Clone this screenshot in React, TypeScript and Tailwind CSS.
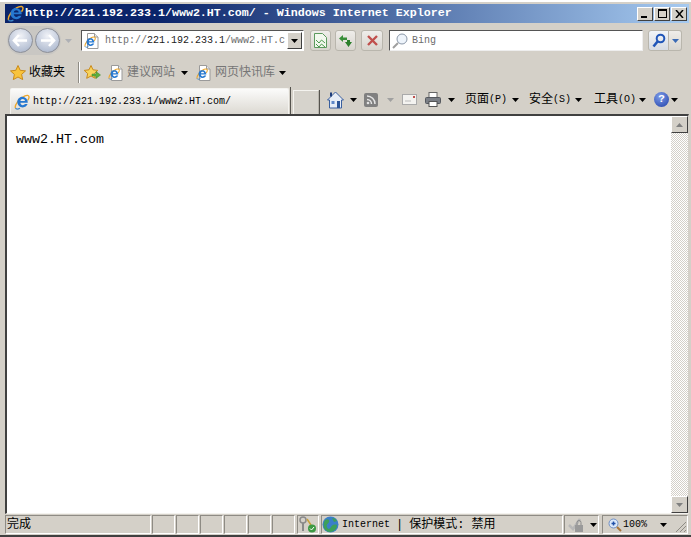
import type { ReactNode } from 'react';

const mono = { fontFamily: '"Liberation Mono", "Noto Sans CJK SC", monospace' };

function IeIcon({ size = 16 }: { size?: number }) {
  return (
    <svg width={size} height={size} viewBox="0 0 16 16" className="shrink-0">
      <path d="M1.500 14C.3 11.500 5 4 11 1.800c2-.7 3.800-.7 4 1 .2 1.200-.6 2.600-1.400 3.600" fill="none" stroke="#eca72c" strokeWidth="1.400" />
      <path d="M8.200 2.800a5.600 5.600 0 0 1 5.600 6H6.400c.1 1.500 1.100 2.400 2.400 2.400 1 0 1.700-.4 2.200-1.100h2.600c-.7 2-2.600 3.300-4.800 3.300-3.100 0-5.500-2.300-5.500-5.300 0-3 2.300-5.300 5-5.300zM6.400 7h4.600c-.1-1.200-1-2-2.300-2S6.600 5.900 6.400 7z" fill="#2678d0" />
      <path d="M1.500 14c.5 1.400 2.500 1.300 4.500.2" fill="none" stroke="#3d86c9" strokeWidth="1.200" />
    </svg>
  );
}

function PageIe() {
  return (
    <span className="relative block w-[15px] h-[16px] shrink-0">
      <svg width="15" height="16" viewBox="0 0 15 16" className="absolute left-0 top-0">
        <path d="M3.500.5h7l3.500 3.500v11.500h-10.500z" fill="#fff" stroke="#9a9a9a" />
        <path d="M10.500.5v3.500h3.500" fill="#e8e8e8" stroke="#9a9a9a" />
      </svg>
      <span className="absolute left-0 top-[3px]">
        <IeIcon size={12} />
      </span>
    </span>
  );
}

function Caret({ color = '#000' }: { color?: string }) {
  return (
    <svg width="7" height="4" viewBox="0 0 7 4" className="shrink-0">
      <path d="M0 0h7L3.500 4z" fill={color} />
    </svg>
  );
}

function NavButton({ dir }: { dir: 'left' | 'right' }) {
  return (
    <span className="block w-[25px] h-[25px] rounded-full border border-[#8c8f98] bg-[radial-gradient(circle_at_50%_30%,#f0f2f7,#b9c3d6_70%,#a4adc0)] flex items-center justify-center shrink-0">
      <svg width="17" height="13" viewBox="0 0 17 13">
        {dir === 'left' ? (
          <path d="M7 1 2 6.500 7 12M2.500 6.500H15" fill="none" stroke="#fff" strokeWidth="2.600" />
        ) : (
          <path d="M10 1l5 5.500L10 12M14.500 6.500H2" fill="none" stroke="#fff" strokeWidth="2.600" />
        )}
      </svg>
    </span>
  );
}

function ToolButton({ children, className = '' }: { children: ReactNode; className?: string }) {
  return (
    <span className={`flex h-[21px] items-center justify-center rounded-[3px] border border-[#b9b6ad] bg-[linear-gradient(#efedea,#d8d5ce)] shrink-0 ${className}`}>
      {children}
    </span>
  );
}

function StatusCell({ className = '', children }: { className?: string; children?: ReactNode }) {
  return (
    <span className={`flex h-full items-center border border-t-[#8e8b84] border-l-[#8e8b84] border-r-[#fff] border-b-[#fff] shrink-0 ${className}`}>
      {children}
    </span>
  );
}

function CommandMenu({ label, hot, className = '' }: { label: string; hot: string; className?: string }) {
  return (
    <span className={`flex items-center shrink-0 whitespace-nowrap text-[12px] text-black ${className}`}>
      {label}
      <span className="text-[10px]">({hot})</span>
    </span>
  );
}

export default function App() {
  return (
    <div className="w-[691px] h-[537px] overflow-hidden bg-[#d4d0c8] flex flex-col pl-[5px] pr-[2px] pt-[4px] pb-px border-t-2 border-t-white border-b-2 border-b-[#404040]" style={mono}>
      {/* title bar */}
      <div className="h-[19px] -mt-[2px] flex items-center pl-[2px] pr-[2px] bg-[linear-gradient(90deg,#0a246a,#0a246a_22%,#a6caf0)] shrink-0">
        <IeIcon size={17} />
        <span className="ml-px text-[11.67px] font-bold text-white whitespace-nowrap">http://221.192.233.1/www2.HT.com/ - Windows Internet Explorer</span>
        <div className="ml-auto flex gap-px">
          {['min', 'max', 'close'].map((name) => (
            <span key={name} className="relative w-[16px] h-[14px] bg-[#d4d0c8] border border-t-white border-l-white border-r-[#404040] border-b-[#404040] flex items-center justify-center">
              {name === 'min' && <span className="absolute left-[3px] bottom-[2px] w-[6px] h-[2px] bg-black" />}
              {name === 'max' && <span className="w-[9px] h-[9px] border border-black border-t-2" />}
              {name === 'close' && (
                <svg width="9" height="8" viewBox="0 0 9 8">
                  <path d="M1 0l7 8M8 0L1 8" stroke="#000" strokeWidth="1.500" />
                </svg>
              )}
            </span>
          ))}
        </div>
      </div>

      {/* address row */}
      <div className="h-[35px] flex items-center shrink-0 pl-[2px]">
        <span className="flex w-[54px] h-[29px] items-center justify-between px-[1px] rounded-full bg-[#c9c7c3] shrink-0">
          <NavButton dir="left" />
          <NavButton dir="right" />
        </span>
        <span className="ml-[4px] mr-[9px]">
          <Caret color="#aeb0b5" />
        </span>
        <div className="w-[223px] h-[21px] flex items-center bg-white border border-t-[#555] border-l-[#555] border-r-white border-b-white shrink-0">
          <span className="ml-[2px]"><PageIe /></span>
          <span className="ml-[6px] text-[10px] text-[#6d6d6d] whitespace-nowrap overflow-hidden w-[185px]">
            http://<span className="text-[#222]">221.192.233.1</span>/www2.HT.c
          </span>
          <span className="ml-auto mr-px w-[15px] h-[17px] bg-[#d4d0c8] border border-t-white border-l-white border-r-[#404040] border-b-[#404040] flex items-center justify-center">
            <Caret />
          </span>
        </div>
        <ToolButton className="w-[21px] ml-[6px]">
          <svg width="13" height="15" viewBox="0 0 13 15">
            <path d="M.5.500h8l4 4v10H.5z" fill="#f2f8ee" stroke="#5c9a5e" />
            <path d="M2 7l3 3 2.500-3 3.500 3M2 11l3 3 2.500-3 3.500 3" fill="none" stroke="#4e9a50" />
          </svg>
        </ToolButton>
        <ToolButton className="w-[21px] ml-[4px]">
          <svg width="15" height="14" viewBox="0 0 15 14">
            <path d="M1 4.500 5 1v2.500h4V6H5v2z" fill="#3a8f3a" />
            <path d="M14 8l-3.500 5L7 8h2V6h3v2z" fill="#2b7f2b" />
          </svg>
        </ToolButton>
        <ToolButton className="w-[22px] ml-[5px]">
          <svg width="11" height="11" viewBox="0 0 11 11">
            <path d="M1 1l9 9M10 1 1 10" stroke="#c0504d" strokeWidth="2.400" />
          </svg>
        </ToolButton>
        <div className="w-[254px] h-[21px] ml-[6px] flex items-center bg-white border border-t-[#555] border-l-[#555] border-r-[#eee] border-b-[#eee] shrink-0">
          <svg width="18" height="18" viewBox="0 0 18 18" className="ml-px shrink-0">
            <circle cx="11" cy="7" r="5" fill="#eef4fb" stroke="#8a97a8" />
            <path d="M7 11l-5 5" stroke="#9f9f9f" strokeWidth="2" />
          </svg>
          <span className="ml-[3px] text-[10px] text-[#6d6d6d]">Bing</span>
        </div>
        <ToolButton className="w-[21px] ml-[5px] rounded-r-none bg-[linear-gradient(#f1f4f8,#d6dbe2)]">
          <svg width="14" height="15" viewBox="0 0 14 15">
            <circle cx="8.500" cy="5.500" r="3.800" fill="none" stroke="#1f55b8" strokeWidth="2" />
            <path d="M5.500 8.500 1.500 13.500" stroke="#1f55b8" strokeWidth="2.600" />
          </svg>
        </ToolButton>
        <ToolButton className="w-[13px] rounded-l-none border-l-0">
          <Caret color="#3b6bb5" />
        </ToolButton>
      </div>

      {/* favorites row */}
      <div className="h-[29px] flex items-center shrink-0 pl-[5px] text-[12px]">
        <svg width="16" height="15" viewBox="0 0 16 15" className="shrink-0">
          <path d="M8 .5l2.200 4.800 5.300.6-3.900 3.500 1.100 5.200L8 12l-4.700 2.600 1.100-5.200L.5 5.900l5.300-.6z" fill="#f8c33c" stroke="#c98a1b" />
        </svg>
        <span className="ml-[3px] text-black">收藏夹</span>
        <span className="ml-[13px] w-px h-[21px] bg-[#8e8b84] border-r border-white box-content" />
        <svg width="17" height="15" viewBox="0 0 17 15" className="ml-[4px] shrink-0">
          <path d="M7 .5l2 4.300 4.800.6-3.500 3.200 1 4.700L7 11l-4.300 2.300 1-4.700L.2 5.400 5 4.800z" fill="#f8d45c" stroke="#c98a1b" />
          <path d="M8 9h4V6.500L16.500 10 12 13.500V11H8z" fill="#5fae3e" stroke="#3d8a2a" strokeWidth=".5" />
        </svg>
        <span className="ml-[7px]"><PageIe /></span>
        <span className="ml-[4px] text-[#767676]">建议网站</span>
        <span className="ml-[6px]"><Caret /></span>
        <span className="ml-[8px]"><PageIe /></span>
        <span className="ml-[4px] text-[#767676]">网页快讯库</span>
        <span className="ml-[4px]"><Caret /></span>
      </div>

      {/* tab + command row */}
      <div className="h-[27px] flex items-end shrink-0">
        <div className="ml-[5px] w-[279px] h-[26px] flex items-center pl-[3px] rounded-t-[2px] border border-b-0 border-[#f4f3ef] bg-[linear-gradient(#fbfbfa,#dcd9d2)]">
          <IeIcon size={16} />
          <span className="ml-[3px] text-[10px] text-black whitespace-nowrap">http://221.192.233.1/www2.HT.com/</span>
        </div>
        <span className="w-px h-[27px] ml-px bg-[#55534e]" />
        <span className="w-[26px] h-[24px] ml-[2px] border border-b-0 border-t-[#f4f3ef] border-l-[#f4f3ef] border-r-[#b8b5ad] bg-[#d6d3cc]" />
        <span className="w-px h-[24px] bg-[#55534e]" />
        <div className="h-[25px] mb-[2px] flex items-center">
          <svg width="17" height="18" viewBox="0 0 17 18" className="ml-[7px] shrink-0">
            <path d="M8.500 1 .5 9h2v8h12V9h2z" fill="#e8eef7" stroke="#3a5f9e" />
            <rect x="4.500" y="10" width="3" height="3" fill="#5f87c8" />
            <rect x="10" y="10" width="3" height="7" fill="#2d5597" />
            <rect x="3" y="1.500" width="2" height="4" fill="#1f3e7c" />
          </svg>
          <span className="ml-[6px]"><Caret /></span>
          <span className="ml-[7px] w-[14px] h-[14px] rounded-[2px] bg-[#808080] flex items-center justify-center shrink-0">
            <svg width="10" height="10" viewBox="0 0 10 10">
              <circle cx="2" cy="8" r="1.300" fill="#e4e4e4" />
              <path d="M1 4.500a4.500 4.500 0 0 1 4.500 4.500M1 1a8 8 0 0 1 8 8" fill="none" stroke="#e4e4e4" strokeWidth="1.500" />
            </svg>
          </span>
          <span className="ml-[9px]"><Caret color="#a0a0a0" /></span>
          <svg width="15" height="11" viewBox="0 0 15 11" className="ml-[8px] shrink-0">
            <rect x=".5" y=".5" width="14" height="10" fill="#f4f3f0" stroke="#aaa" />
            <rect x="11" y="2" width="2" height="2" fill="#c0504d" />
            <path d="M3 7h6" stroke="#bbb" />
          </svg>
          <svg width="16" height="15" viewBox="0 0 16 15" className="ml-[8px] shrink-0">
            <rect x="4" y=".5" width="8" height="5" fill="#fff" stroke="#666" />
            <rect x=".5" y="5.500" width="15" height="6" rx="1" fill="#7b7f86" stroke="#55585e" />
            <rect x="4" y="9.500" width="8" height="5" fill="#fff" stroke="#555" />
          </svg>
          <span className="ml-[7px]"><Caret /></span>
          <CommandMenu label="页面" hot="P" className="ml-[10px] w-[42px]" />
          <span className="ml-[5px]"><Caret /></span>
          <CommandMenu label="安全" hot="S" className="ml-[10px] w-[42px]" />
          <span className="ml-[4px]"><Caret /></span>
          <CommandMenu label="工具" hot="O" className="ml-[12px] w-[42px]" />
          <span className="ml-[3px]"><Caret /></span>
          <span className="ml-[8px] w-[15px] h-[15px] rounded-full bg-[radial-gradient(circle_at_40%_30%,#7e9ce8,#1f3fa8)] text-white text-[11px] font-bold flex items-center justify-center shrink-0">?</span>
          <span className="ml-[2px]"><Caret /></span>
        </div>
      </div>

      {/* page */}
      <div className="flex-1 min-h-0 flex bg-white border border-t-2 border-l-2 border-t-[#404040] border-l-[#404040] border-r-[#d4d0c8] border-b-[#f4f3ef]">
        <div className="flex-1 pl-[9px] pt-[15px] text-[13.33px] text-black leading-[18px]">www2.HT.com</div>
        <div className="w-[17px] flex flex-col justify-between bg-[repeating-conic-gradient(#d4d0c8_0_25%,#fff_0_50%)] bg-[length:2px_2px]">
          <span className="h-[17px] bg-[#d4d0c8] border border-t-white border-l-white border-r-[#404040] border-b-[#404040] flex items-center justify-center">
            <svg width="7" height="4" viewBox="0 0 7 4"><path d="M0 4h7L3.500 0z" fill="#808080" /></svg>
          </span>
          <span className="h-[17px] bg-[#d4d0c8] border border-t-white border-l-white border-r-[#404040] border-b-[#404040] flex items-center justify-center">
            <Caret color="#808080" />
          </span>
        </div>
      </div>

      {/* status bar */}
      <div className="h-[19px] mt-px flex shrink-0 text-[10px] text-black gap-px">
        <StatusCell className="w-[146px] pl-px text-[12px]">完成</StatusCell>
        {[0, 1, 2, 3, 4, 5].map((i) => (
          <StatusCell key={i} className="w-[23px]" />
        ))}
        <StatusCell className="w-[22px] ml-px justify-center">
          <svg width="18" height="17" viewBox="0 0 18 17">
            <circle cx="4" cy="4" r="3" fill="none" stroke="#8a8a8a" strokeWidth="1.500" />
            <path d="M4 7v8" stroke="#8a8a8a" strokeWidth="2" />
            <path d="M8 3l4 6" stroke="#c9a13b" strokeWidth="1.500" />
            <circle cx="13" cy="12.500" r="4" fill="#3d9a44" />
            <path d="M11 12.500l1.500 1.500 2.500-3" fill="none" stroke="#fff" />
          </svg>
        </StatusCell>
        <StatusCell className="w-[242px] ml-px">
          <svg width="17" height="17" viewBox="0 0 17 17" className="shrink-0">
            <circle cx="8.500" cy="8.500" r="8" fill="#3b7fc9" />
            <path d="M3 4c3-2 5 0 4 2S4 8 5 11s3 2 4 0 3-3 6-2c0 4-3 7-7 7-6 0-8-7-5-12zM10 2c2 0 4 1 5 3l-3 1z" fill="#3da05a" />
          </svg>
          <span className="ml-[3px] whitespace-nowrap">Internet</span>
          <span className="ml-[6px] text-[12px]">|</span>
          <span className="ml-[6px] text-[12px] whitespace-nowrap">保护模式: 禁用</span>
        </StatusCell>
        <StatusCell className="w-[35px] pl-[3px]">
          <svg width="18" height="16" viewBox="0 0 18 16" className="shrink-0">
            <path d="M1 8l4 4 7-10" fill="none" stroke="#b8b8b8" strokeWidth="2.500" />
            <rect x="7" y="8" width="8" height="7" fill="#9a9a9a" />
            <path d="M9 8V5.500a2 2 0 0 1 4 0V8" fill="none" stroke="#8a8a8a" />
          </svg>
          <span className="ml-[4px]"><Caret /></span>
        </StatusCell>
        <StatusCell className="w-[86px] ml-[2px] pl-[5px]">
          <svg width="14" height="14" viewBox="0 0 14 14" className="shrink-0">
            <circle cx="5.500" cy="5.500" r="4.500" fill="#dbe8fa" stroke="#6f8fc4" />
            <path d="M3.500 5.500h4M5.500 3.500v4" stroke="#1f4fa8" strokeWidth="1.500" />
            <path d="M9 9l4 4" stroke="#a8743a" strokeWidth="2" />
          </svg>
          <span className="ml-px">100%</span>
          <span className="ml-[13px]"><Caret /></span>
          <svg width="12" height="12" viewBox="0 0 12 12" className="ml-auto shrink-0 self-end">
            <path d="M11 1 1 11M11 5l-6 6M11 9l-2 2" stroke="#8e8b84" />
          </svg>
        </StatusCell>
      </div>
    </div>
  );
}
